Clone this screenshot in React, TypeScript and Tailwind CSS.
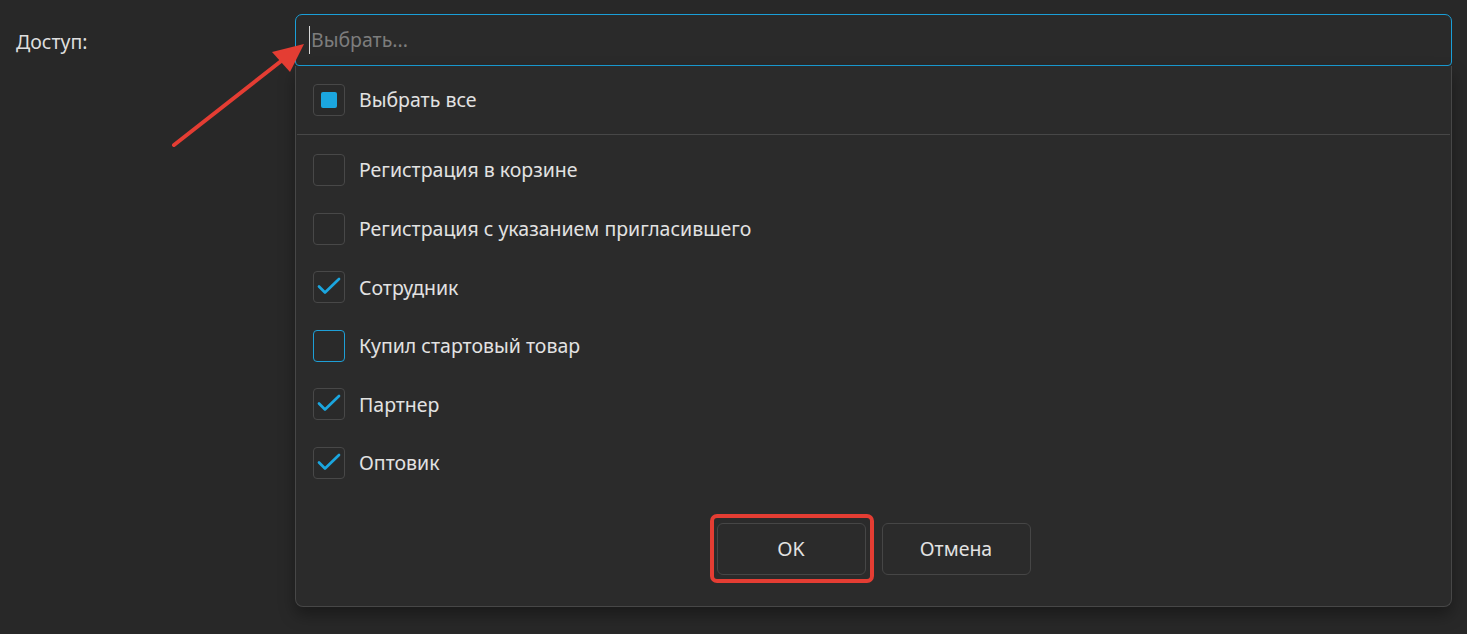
import React from "react";

const font = { fontFamily: '"Noto Sans", "Open Sans", sans-serif' };

const items = [
  { label: "Регистрация в корзине", checked: false, focused: false },
  { label: "Регистрация с указанием пригласившего", checked: false, focused: false },
  { label: "Сотрудник", checked: true, focused: false },
  { label: "Купил стартовый товар", checked: false, focused: true },
  { label: "Партнер", checked: true, focused: false },
  { label: "Оптовик", checked: true, focused: false },
];

function Box({ checked, focused, partial }: { checked?: boolean; focused?: boolean; partial?: boolean }) {
  return (
    <div
      className={
        "w-8 h-8 shrink-0 rounded-[4px] border flex items-center justify-center bg-[#2a2a2a] " +
        (focused ? "border-[#1e9fd6]" : "border-[#484848]")
      }
    >
      {partial && <div className="w-4 h-4 rounded-[2px] bg-[#1ba6df]" />}
      {checked && (
        <svg width="24" height="24" viewBox="0 0 24 24" fill="none">
          <path d="M2 11.5l6 6L22 4" stroke="#1ba6df" strokeWidth="2.7" strokeLinecap="round" strokeLinejoin="round" />
        </svg>
      )}
    </div>
  );
}

export default function App() {
  return (
    <div className="relative w-full h-[634px] bg-[#282828] flex text-[#e2e2e2]" style={font}>
      <div className="w-[295px] shrink-0 pl-4 pt-[28px] text-[19.5px] leading-[28px] text-[#dedede]">Доступ:</div>

      <div className="flex-1 mr-[15px] mt-[14px] flex flex-col">
        <div className="h-[52px] rounded-t-[7px] rounded-b-[4px] border border-[#1a9fd8] flex items-center pl-[13px] bg-[#2a2a2a]">
          <div className="w-px h-[28px] bg-[#d8d8d8]" />
          <span className="text-[19.5px] text-[#7d7d7d] ml-[1px]">Выбрать...</span>
        </div>

        <div className="h-[541px] border border-t-0 border-[#474747] rounded-b-[8px] bg-[#2b2b2b] shadow-[0_8px_16px_rgba(0,0,0,0.35)] flex flex-col">
          <div className="flex items-center gap-[14px] pl-[17px] pt-[18px] pb-[18px]">
            <Box partial />
            <span className="text-[19.5px]">Выбрать все</span>
          </div>
          <div className="h-px bg-[#474747] mx-[1px]" />
          <div className="flex flex-col gap-[26.6px] pt-[19px] pl-[17px]">
            {items.map((it) => (
              <div key={it.label} className="flex items-center gap-[14px]">
                <Box checked={it.checked} focused={it.focused} />
                <span className="text-[19.5px]">{it.label}</span>
              </div>
            ))}
          </div>
          <div className="flex justify-center gap-4 mt-[44px]">
            <div className="relative">
              <button className="w-[149px] h-[52px] rounded-[6px] border border-[#464646] bg-[#2b2b2b] text-[19.5px] text-[#e2e2e2]">
                OK
              </button>
              <div className="absolute -left-[7px] -top-[9px] w-[164px] h-[69px] border-[4px] border-[#e43d33] rounded-[7px] pointer-events-none" />
            </div>
            <button className="w-[149px] h-[52px] rounded-[6px] border border-[#464646] bg-[#2b2b2b] text-[19.5px] text-[#e2e2e2]">
              Отмена
            </button>
          </div>
        </div>
      </div>

      <svg className="absolute left-0 top-0 pointer-events-none" width="400" height="200">
        <line x1="174" y1="145" x2="285" y2="58" stroke="#e43d33" strokeWidth="4" strokeLinecap="round" />
        <polygon points="304,44 272,52 290,72" fill="#e43d33" />
      </svg>
    </div>
  );
}
